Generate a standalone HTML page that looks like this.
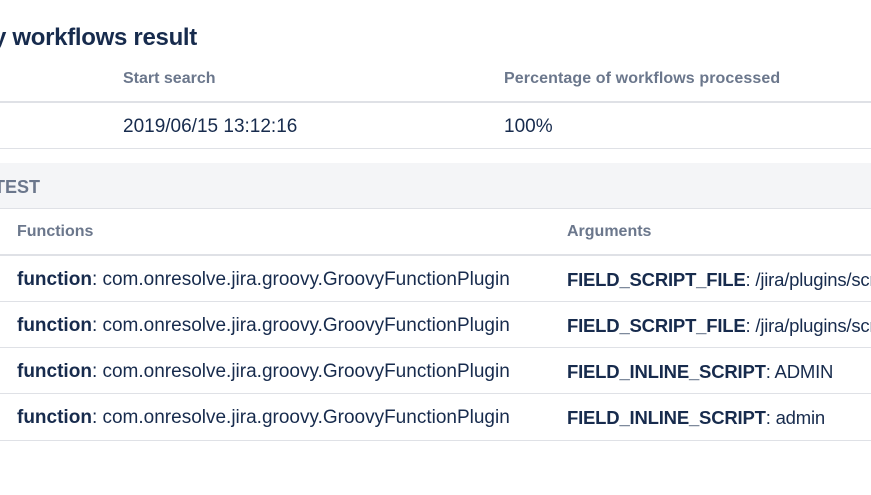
<!DOCTYPE html>
<html><head><style>
body{margin:0;width:871px;height:495px;overflow:hidden;background:#fff;font-family:"Liberation Sans",sans-serif;color:#172b4d;position:relative}
div{position:absolute;white-space:nowrap}
.h{font-size:16px;font-weight:bold;color:#6b778c}
.t{font-size:19px}
.a{font-size:18.5px;letter-spacing:-0.2px}
.l{left:0;width:871px;background:#dfe1e6}
b{font-weight:bold}
</style></head><body>
<div style="left:-7px;top:24px;font-size:24px;font-weight:bold;letter-spacing:-0.3px">y workflows result</div>
<div class="h" style="left:123px;top:70px">Start search</div>
<div class="h" style="left:504px;top:70px;letter-spacing:0.1px">Percentage of workflows processed</div>
<div class="l" style="top:101px;height:2px"></div>
<div class="t" style="left:123px;top:116px">2019/06/15 13:12:16</div>
<div class="t" style="left:504px;top:116px">100%</div>
<div class="l" style="top:148px;height:1px"></div>
<div style="left:0;top:163px;width:871px;height:45px;background:#f4f5f7"></div>
<div class="h" style="left:-6px;top:177px;font-size:18px">TEST</div>
<div class="l" style="top:208px;height:1px"></div>
<div class="h" style="left:17px;top:223px">Functions</div>
<div class="h" style="left:567px;top:223px">Arguments</div>
<div class="l" style="top:254px;height:2px"></div>
<div class="t" style="left:17px;top:269px"><b>function</b>: com.onresolve.jira.groovy.GroovyFunctionPlugin</div>
<div class="t a" style="left:567px;top:269px"><b>FIELD_SCRIPT_FILE</b>: /jira/plugins/script</div>
<div class="l" style="top:301px;height:1px"></div>
<div class="t" style="left:17px;top:315px"><b>function</b>: com.onresolve.jira.groovy.GroovyFunctionPlugin</div>
<div class="t a" style="left:567px;top:315px"><b>FIELD_SCRIPT_FILE</b>: /jira/plugins/script</div>
<div class="l" style="top:347px;height:1px"></div>
<div class="t" style="left:17px;top:361px"><b>function</b>: com.onresolve.jira.groovy.GroovyFunctionPlugin</div>
<div class="t a" style="left:567px;top:361px"><b>FIELD_INLINE_SCRIPT</b>: ADMIN</div>
<div class="l" style="top:393px;height:1px"></div>
<div class="t" style="left:17px;top:407px"><b>function</b>: com.onresolve.jira.groovy.GroovyFunctionPlugin</div>
<div class="t a" style="left:567px;top:407px"><b>FIELD_INLINE_SCRIPT</b>: admin</div>
<div class="l" style="top:440px;height:1px"></div>
</body></html>
